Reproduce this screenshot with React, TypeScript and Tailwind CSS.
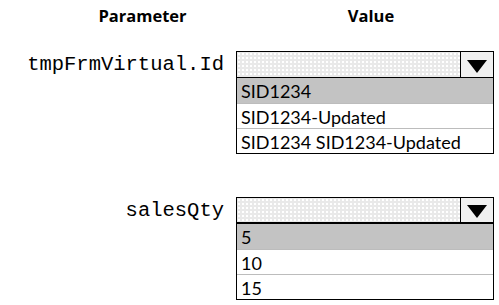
import React from 'react'

type Field = {
  label: string
  options: string[]
  thickHeader?: boolean
}

const fields: Field[] = [
  { label: 'tmpFrmVirtual.Id', options: ['SID1234', 'SID1234-Updated', 'SID1234 SID1234-Updated'] },
  { label: 'salesQty', options: ['5', '10', '15'], thickHeader: true },
]

function Dropdown({ options, thickHeader }: { options: string[]; thickHeader?: boolean }) {
  return (
    <div className="w-[258px] border border-black bg-white">
      <div
        className={
          'flex h-[26px] border-black bg-[#e9e9e9] bg-[radial-gradient(#ffffff_0.8px,transparent_0.9px)] bg-[length:4px_4px] ' +
          (thickHeader ? 'border-b-2' : 'border-b')
        }
      >
        <div className="flex-1" />
        <div className="flex w-[33px] items-center justify-center border-l border-black bg-[#f0f0f0] pt-[4px]">
          <svg width="20" height="13" viewBox="0 0 20 13">
            <polygon points="0,0 20,0 10,13" fill="#000" />
          </svg>
        </div>
      </div>
      {options.map((opt, i) => (
        <div
          key={opt}
          className={
            'flex h-[25px] items-center px-[4px] pt-[2px] text-[18px] leading-none text-black ' +
            (i === 0 ? 'bg-[#c3c3c3] ' : 'border-t border-[#bcbcbc] ')
          }
          style={{ fontFamily: 'Lato, "Liberation Sans", sans-serif' }}
        >
          {opt}
        </div>
      ))}
    </div>
  )
}

export default function App() {
  return (
    <div className="h-[305px] w-[499px] overflow-hidden bg-white">
      <div className="flex pt-[4px] text-[16.5px] font-bold text-black" style={{ fontFamily: '"Open Sans", sans-serif' }}>
        <div className="w-[285px] text-center">Parameter</div>
        <div className="w-[172px] text-center">Value</div>
      </div>

      <div className="mt-[22px] flex flex-col gap-[43px]">
        {fields.map((f) => (
          <div key={f.label} className="flex items-start">
            <div
              className="flex h-[28px] w-[236px] items-center justify-end pr-[12px] pt-[2px] text-[20.5px] text-black"
              style={{ fontFamily: '"Liberation Mono", monospace' }}
            >
              {f.label}
            </div>
            <Dropdown options={f.options} thickHeader={f.thickHeader} />
          </div>
        ))}
      </div>
    </div>
  )
}
